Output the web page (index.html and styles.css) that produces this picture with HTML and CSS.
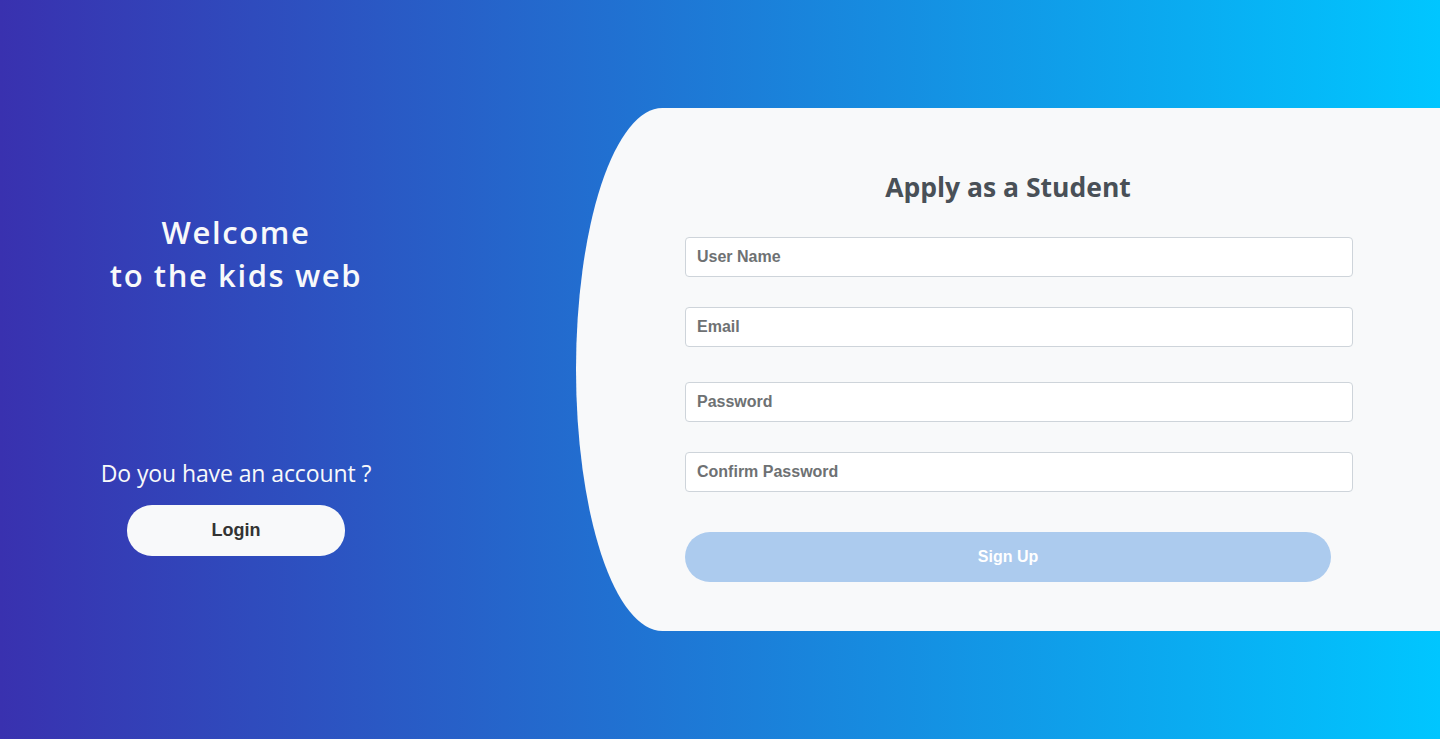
FILE: index.html
```html
<!DOCTYPE html>
<html lang="en">
<head>
<meta charset="utf-8">
<title>Register</title>
<link rel="stylesheet" href="styles.css">
</head>
<body>
<main class="page">
  <section class="intro">
    <h1 class="welcome">Welcome<br>to the kids web</h1>
    <p class="question">Do you have an account ?</p>
    <button class="btn-login" type="button">Login</button>
  </section>
  <section class="card">
    <h2 class="card-title">Apply as a Student</h2>
    <form class="form">
      <input class="field" type="text" placeholder="User Name">
      <input class="field field-email" type="email" placeholder="Email">
      <input class="field field-pass" type="password" placeholder="Password">
      <input class="field field-confirm" type="password" placeholder="Confirm Password">
      <button class="btn-signup" type="button">Sign Up</button>
    </form>
  </section>
</main>
</body>
</html>
```

FILE: styles.css
```css
* { box-sizing: border-box; }
html, body { margin: 0; padding: 0; }
body {
  height: 739px;
  overflow: hidden;
  background: linear-gradient(to right, #3931af, #00c6ff);
  font-family: "Liberation Sans", Arial, sans-serif;
}
.page {
  height: 739px;
  display: flex;
  align-items: center;
}
.intro {
  width: 576px;
  align-self: flex-start;
  padding-top: 211px;
  padding-right: 104px;
  display: flex;
  flex-direction: column;
  align-items: center;
  color: #f8f9fa;
}
.welcome {
  margin: 0;
  font-family: "Open Sans", "Noto Sans", sans-serif;
  font-weight: 600;
  font-size: 31px;
  line-height: 43px;
  letter-spacing: 1.6px;
  text-align: center;
}
.question {
  margin: 161px 0 0;
  font-family: "Open Sans", "Noto Sans", sans-serif;
  font-size: 23px;
  line-height: 30px;
  font-weight: 400;
  letter-spacing: -0.1px;
}
.btn-login {
  margin-top: 17px;
  width: 218px;
  height: 51px;
  border: none;
  border-radius: 25px;
  background: #f8f9fa;
  color: #333;
  font-family: "Liberation Sans", Arial, sans-serif;
  font-weight: 700;
  font-size: 18px;
}
.card {
  flex: 1;
  height: 523px;
  background: #f8f9fa;
  border-top-left-radius: 10% 50%;
  border-bottom-left-radius: 10% 50%;
  padding-top: 63px;
}
.card-title {
  margin: 0;
  text-align: center;
  color: #495057;
  font-family: "Open Sans", "Noto Sans", sans-serif;
  font-weight: 700;
  font-size: 26.5px;
  line-height: 32px;
}
.form {
  margin: 34px 0 0 109px;
  width: 668px;
  display: flex;
  flex-direction: column;
}
.field {
  height: 40px;
  border: 1px solid #ced4da;
  border-radius: 4px;
  background: #fff;
  padding: 0 11px;
  font-family: "Liberation Sans", Arial, sans-serif;
  font-weight: 700;
  font-size: 16px;
  color: #495057;
}
.field::placeholder { color: #6e7173; opacity: 1; }
.field-email { margin-top: 30px; }
.field-pass { margin-top: 35px; }
.field-confirm { margin-top: 30px; }
.btn-signup {
  margin-top: 40px;
  width: 646px;
  height: 50px;
  border: none;
  border-radius: 25px;
  background: #accbee;
  color: #fff;
  font-family: "Liberation Sans", Arial, sans-serif;
  font-weight: 700;
  font-size: 16px;
}
```
